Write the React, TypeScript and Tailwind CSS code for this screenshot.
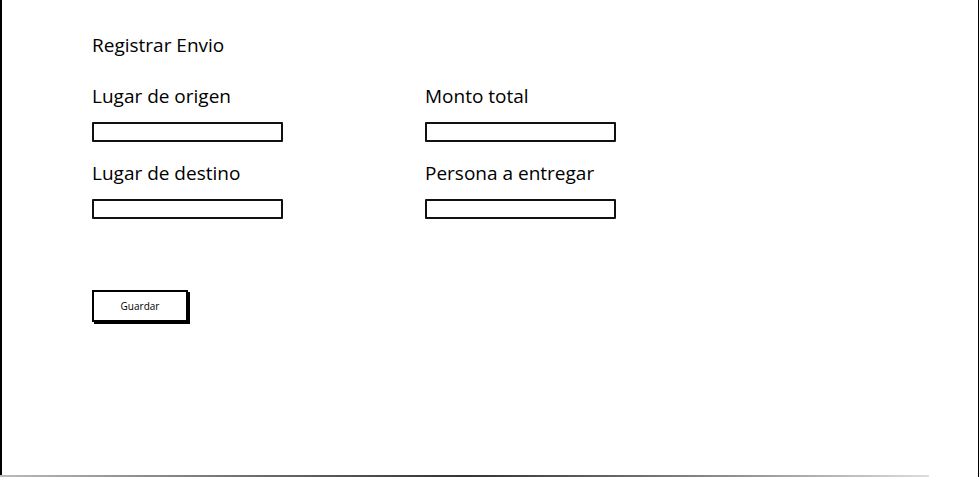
import React from "react";

function Field({ label }: { label: string }) {
  return (
    <div className="flex flex-col">
      <div className="h-[26px] text-[19px] leading-[26px] text-black">{label}</div>
      <div className="mt-[13px] h-[20px] w-[191px] border-2 border-[#111] rounded-[1px] bg-white" />
    </div>
  );
}

export default function App() {
  return (
    <div
      className="relative w-[979px] h-[477px] bg-white overflow-hidden"
      style={{ fontFamily: '"Open Sans", "Noto Sans", sans-serif' }}
    >
      <div className="absolute left-0 top-0 bottom-0 w-[2px] bg-black" />
      <div className="absolute right-0 top-0 bottom-0 w-[1.5px] bg-black" />
      <div className="absolute left-0 right-[50px] bottom-0 h-[2px] bg-gradient-to-r from-[#bbb] via-[#333] to-[#ddd]" />
      <div className="pl-[92px] pt-[32px]">
        <div className="h-[26px] text-[19px] leading-[26px] text-black">Registrar Envio</div>
        <div className="mt-[25px] grid grid-cols-[333px_333px] gap-y-[18px]">
          <Field label="Lugar de origen" />
          <Field label="Monto total" />
          <Field label="Lugar de destino" />
          <Field label="Persona a entregar" />
        </div>
        <button className="mt-[71px] w-[96px] h-[32px] border-2 border-black bg-white text-[10px] text-black shadow-[2px_2px_0_0_#000]">
          Guardar
        </button>
      </div>
    </div>
  );
}
